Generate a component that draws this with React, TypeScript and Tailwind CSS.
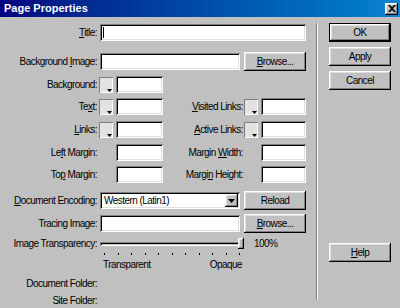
import React from "react";

const sunken =
  "bg-white shadow-[inset_1px_1px_0_#808080,inset_-1px_-1px_0_#ffffff,inset_2px_2px_0_#000000,inset_-2px_-2px_0_#dfdfdf]";
const raised =
  "bg-[#c0c0c0] shadow-[inset_-1px_-1px_0_#000000,inset_1px_1px_0_#ffffff,inset_-2px_-2px_0_#808080,inset_2px_2px_0_#dfdfdf]";

function Label({ children, w = "w-[97px]" }: { children: React.ReactNode; w?: string }) {
  return <div className={`${w} shrink-0 text-right whitespace-nowrap`}>{children}</div>;
}

function U({ children }: { children: React.ReactNode }) {
  return <span className="underline underline-offset-[1px]">{children}</span>;
}

function Field({ w, h = "h-[17px]", children }: { w: string; h?: string; children?: React.ReactNode }) {
  return <div className={`${sunken} ${w} ${h} shrink-0 relative`}>{children}</div>;
}

function Btn({ children, w = "w-[62px]", h = "h-[19px]", def }: { children: React.ReactNode; w?: string; h?: string; def?: boolean }) {
  if (def) {
    return (
      <div className={`${w} ${h} border border-black shrink-0`}>
        <div className={`${raised} w-full h-full flex items-center justify-center`}>{children}</div>
      </div>
    );
  }
  return <div className={`${raised} ${w} ${h} shrink-0 flex items-center justify-center`}>{children}</div>;
}

function Swatch() {
  return (
    <div className="w-[14px] h-[16px] shrink-0 relative bg-[#e2e2e2] shadow-[inset_1px_1px_0_#808080,inset_-1px_-1px_0_#ffffff]">
      <svg className="absolute right-[1px] bottom-[1px]" width="5" height="3" viewBox="0 0 5 3">
        <path d="M0 0h5L2.5 3z" fill="#000" />
      </svg>
    </div>
  );
}

export default function App() {
  const ticks = Array.from({ length: 11 });
  return (
    <div className="w-[400px] h-[308px] bg-[#c0c0c0] overflow-hidden font-['Liberation_Sans',Arial,sans-serif] text-[10px] tracking-[-0.55px] text-black leading-none">
      {/* title bar */}
      <div className="h-[17px] bg-gradient-to-r from-[#000080] to-[#1084d0] flex items-center justify-between pl-[4px] pr-[2px]">
        <span className="text-white font-bold text-[11px] tracking-[0px]">Page Properties</span>
        <div className={`${raised} w-[13px] h-[12px] flex items-center justify-center`}>
          <svg width="8" height="7" viewBox="0 0 8 7">
            <path d="M0 0h2l2 2 2-2h2L5 3.5 8 7H6L4 5 2 7H0l3-3.5z" fill="#000" />
          </svg>
        </div>
      </div>

      <div className="flex">
        {/* form */}
        <div className="w-[316px] shrink-0 pt-[7px] flex flex-col">
          <div className="flex items-center h-[17px]">
            <Label><U>T</U>itle:</Label>
            <div className="ml-[3px]">
              <Field w="w-[206px]">
                <div className="absolute left-[3px] top-[3px] w-[1px] h-[11px] bg-black" />
              </Field>
            </div>
          </div>

          <div className="flex items-center h-[19px] mt-[11px]">
            <Label>Background <U>I</U>mage:</Label>
            <div className="ml-[3px] flex items-center gap-[4px]">
              <Field w="w-[140px]" />
              <Btn><span><U>B</U>rowse...</span></Btn>
            </div>
          </div>

          <div className="flex items-center h-[17px] mt-[5px]">
            <Label>Background:</Label>
            <div className="ml-[2px] flex items-center gap-[3px]">
              <Swatch />
              <Field w="w-[47px]" />
            </div>
          </div>

          <div className="flex items-center h-[17px] mt-[5px]">
            <Label>Te<U>x</U>t:</Label>
            <div className="ml-[2px] flex items-center gap-[3px]">
              <Swatch />
              <Field w="w-[47px]" />
            </div>
            <Label w="w-[80px]"><U>V</U>isited Links:</Label>
            <div className="ml-[1px] flex items-center gap-[3px]">
              <Swatch />
              <Field w="w-[45px]" />
            </div>
          </div>

          <div className="flex items-center h-[17px] mt-[6px]">
            <Label><U>L</U>inks:</Label>
            <div className="ml-[2px] flex items-center gap-[3px]">
              <Swatch />
              <Field w="w-[47px]" />
            </div>
            <Label w="w-[80px]"><U>A</U>ctive Links:</Label>
            <div className="ml-[1px] flex items-center gap-[3px]">
              <Swatch />
              <Field w="w-[45px]" />
            </div>
          </div>

          <div className="flex items-center h-[17px] mt-[6px]">
            <Label>Le<U>f</U>t Margin:</Label>
            <div className="ml-[19px]">
              <Field w="w-[47px]" />
            </div>
            <Label w="w-[80px]">Margin <U>W</U>idth:</Label>
            <div className="ml-[18px]">
              <Field w="w-[45px]" />
            </div>
          </div>

          <div className="flex items-center h-[17px] mt-[5px]">
            <Label>To<U>p</U> Margin:</Label>
            <div className="ml-[19px]">
              <Field w="w-[47px]" />
            </div>
            <Label w="w-[80px]">Margi<U>n</U> Height:</Label>
            <div className="ml-[18px]">
              <Field w="w-[45px]" />
            </div>
          </div>

          <div className="flex items-center h-[19px] mt-[8px]">
            <Label><U>D</U>ocument Encoding:</Label>
            <div className="ml-[3px] flex items-center gap-[4px]">
              <Field w="w-[140px]">
                <div className="flex items-center h-full pl-[4px] pr-[2px] justify-between">
                  <span>Western (Latin1)</span>
                  <div className={`${raised} w-[13px] h-[13px] flex items-center justify-center`}>
                    <svg width="7" height="4" viewBox="0 0 7 4">
                      <path d="M0 0h7L3.5 4z" fill="#000" />
                    </svg>
                  </div>
                </div>
              </Field>
              <Btn>Reload</Btn>
            </div>
          </div>

          <div className="flex items-center h-[19px] mt-[4px]">
            <Label>Tracing Image:</Label>
            <div className="ml-[3px] flex items-center gap-[4px]">
              <Field w="w-[140px]" />
              <Btn><span><U>B</U>rowse...</span></Btn>
            </div>
          </div>

          <div className="flex items-center h-[12px] mt-[5px]">
            <Label>Image Transparency:</Label>
            <div className="ml-[3px] w-[142px] relative h-[12px] flex items-center">
              <div className="w-full h-[4px] bg-[#c0c0c0] shadow-[inset_1px_1px_0_#808080,inset_-1px_-1px_0_#ffffff,inset_2px_2px_0_#000000]" />
              <div className={`${raised} absolute right-[-2px] top-[0px] w-[6px] h-[11px]`} />
            </div>
            <span className="ml-[12px]">100%</span>
          </div>

          <div className="flex justify-between w-[136px] ml-[104px] mt-[3px] h-[2px]">
            {ticks.map((_, i) => (
              <div key={i} className="w-[1px] h-[2px] bg-black" />
            ))}
          </div>

          <div className="flex justify-between w-[139px] ml-[103px] mt-[5px]">
            <span>Transparent</span>
            <span>Opaque</span>
          </div>

          <div className="flex items-center h-[12px] mt-[8px]">
            <Label>Document Folder:</Label>
          </div>
          <div className="flex items-center h-[12px] mt-[5px]">
            <Label>Site Folder:</Label>
          </div>
        </div>

        {/* separator */}
        <div className="mt-[6px] h-[277px] w-[2px] shrink-0 flex">
          <div className="w-[1px] h-full bg-[#808080]" />
          <div className="w-[1px] h-full bg-white" />
        </div>

        {/* buttons */}
        <div className="ml-[11px] pt-[6px] flex flex-col gap-[5px]">
          <Btn def>OK</Btn>
          <Btn>Apply</Btn>
          <Btn>Cancel</Btn>
          <div className="mt-[148px]">
            <Btn><span><U>H</U>elp</span></Btn>
          </div>
        </div>
      </div>
    </div>
  );
}
